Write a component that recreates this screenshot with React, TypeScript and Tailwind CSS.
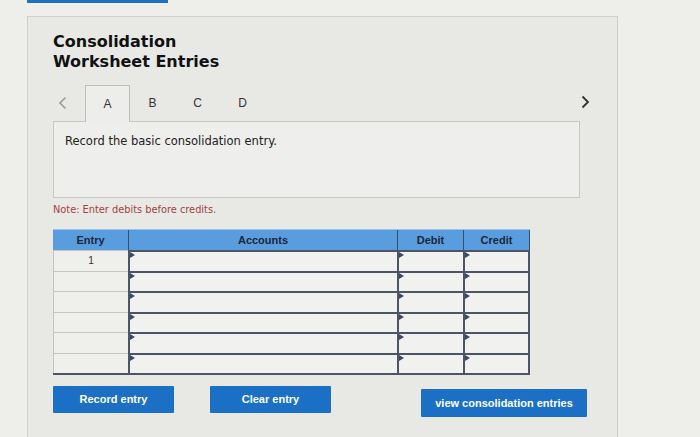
import React from 'react';

const verdana = { fontFamily: '"DejaVu Sans", Verdana, sans-serif' };
const arial = { fontFamily: '"Liberation Sans", Arial, sans-serif' };

const tabs = ['A', 'B', 'C', 'D'];

function Marker() {
  // little arrow in the corner of each input cell
  return (
    <svg className="absolute left-0 top-0" width="5" height="6" viewBox="0 0 5 6">
      <path d="M0 0 L5 3 L0 6 Z" fill="#3b4a63" />
    </svg>
  );
}

export default function App() {
  const rows = [1, 2, 3, 4, 5, 6];

  return (
    <div className="w-[700px] h-[437px] overflow-hidden bg-[#eeeeeb]" style={verdana}>
      <div className="ml-[27px] w-[141px] h-[3px] bg-[#1f6fc2]" />

      <div className="ml-[27px] mt-[13px] w-[591px] h-[430px] border-l border-t border-r border-[#cfcfcc] bg-[#e8e8e5] pt-[15px] pl-[25px]">
        {/* Title */}
        <h1 className="text-[16px] leading-[20px] font-bold text-[#111]">
          Consolidation
          <br />
          Worksheet Entries
        </h1>

        {/* Tabs */}
        <div className="mt-[12px] flex items-end w-[527px] h-[37px] relative">
          <div className="w-[32px] h-full flex items-center pl-[5px]">
            <svg width="9" height="14" viewBox="0 0 9 14">
              <path d="M7.5 1.5 L2 7 L7.5 12.5" stroke="#9b9b9b" strokeWidth="1.6" fill="none" />
            </svg>
          </div>
          {tabs.map((t, i) => (
            <div
              key={t}
              className={`w-[45px] h-full flex items-center justify-center text-[12px] text-[#333] ${
                i === 0 ? 'border-l border-t border-r border-[#bdbdbb] bg-[#ededeb] h-[38px] -mb-px relative z-10' : ''
              }`}
              style={arial}
            >
              {t}
            </div>
          ))}
          <div className="absolute right-[-10px] top-[11px]">
            <svg width="9" height="14" viewBox="0 0 9 14">
              <path d="M1.5 1.5 L7 7 L1.5 12.5" stroke="#333" strokeWidth="1.8" fill="none" />
            </svg>
          </div>
        </div>

        {/* Instruction box */}
        <div className="w-[527px] h-[77px] border border-[#c7c7c5] bg-[#eeeeec] pl-[11px] pt-[12px]">
          <p className="text-[11.5px] leading-[14px] text-[#222]">Record the basic consolidation entry.</p>
        </div>

        <p className="mt-[6px] text-[9.8px] leading-[12px] text-[#a3423f]">Note: Enter debits before credits.</p>

        {/* Journal table */}
        <div className="mt-[13px] w-[477px]" style={arial}>
          <div className="grid grid-cols-[75px_269px_66px_67px] h-[21px] bg-[#5a9ddf] border-t border-[#9cc4ea] text-[11px] font-bold text-[#1c2636]">
            <div className="flex items-center justify-center">Entry</div>
            <div className="flex items-center justify-center border-l border-[#2f4f73]">Accounts</div>
            <div className="flex items-center justify-center border-l border-[#2f4f73]">Debit</div>
            <div className="flex items-center justify-center border-l border-r border-[#2f4f73]">Credit</div>
          </div>
          <div className="grid grid-cols-[75px_269px_66px_67px] border-b-2 border-[#4b5566] bg-[#efefec]">
            {rows.map((r) => (
              <React.Fragment key={r}>
                <div className="h-[20.5px] border-l border-t border-[#c4c4c2] flex items-center justify-center text-[10px] text-[#333]">
                  {r === 1 ? '1' : ''}
                </div>
                <div className="relative h-[20.5px] border-l-2 border-t-2 border-[#4b5566] bg-[#f1f1ef]">
                  <Marker />
                </div>
                <div className="relative h-[20.5px] border-l-2 border-t-2 border-[#4b5566] bg-[#f1f1ef]">
                  <Marker />
                </div>
                <div className="relative h-[20.5px] border-l-2 border-r-2 border-t-2 border-[#4b5566] bg-[#f1f1ef]">
                  <Marker />
                </div>
              </React.Fragment>
            ))}
          </div>
        </div>

        {/* Buttons */}
        <div className="mt-[11px] flex items-start text-[11px] font-bold text-white" style={arial}>
          <button className="w-[121px] h-[27px] bg-[#1b70c5] rounded-[1px]">Record entry</button>
          <button className="ml-[36px] w-[121px] h-[27px] bg-[#1b70c5] rounded-[1px]">Clear entry</button>
          <button className="ml-[90px] mt-[3px] w-[166px] h-[28px] bg-[#1b70c5] rounded-[1px]">view consolidation entries</button>
        </div>
      </div>
    </div>
  );
}
